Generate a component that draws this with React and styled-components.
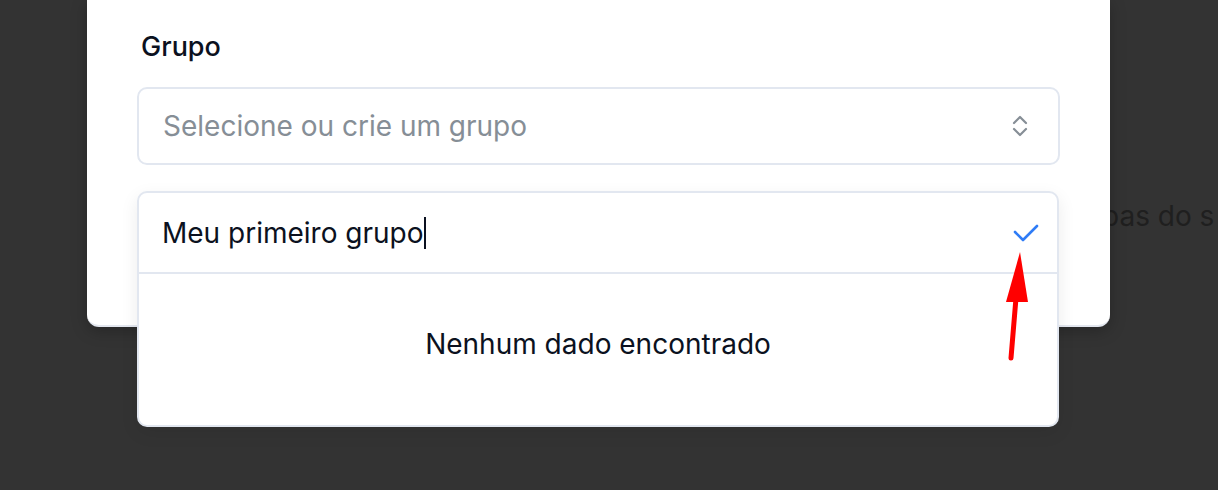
import styled, { createGlobalStyle } from "styled-components";

const GlobalStyle = createGlobalStyle`
  html, body {
    margin: 0;
    padding: 0;
    background: #333333;
    font-family: Inter, "Noto Sans", sans-serif;
  }
`;

const Page = styled.div`
  position: relative;
  width: 1218px;
  height: 490px;
  overflow: hidden;
  background: #333333;
`;

const BehindText = styled.div`
  position: absolute;
  left: 1102px;
  top: 199px;
  font-size: 28px;
  color: #1f1f1f;
  white-space: nowrap;
`;

const Modal = styled.div`
  position: relative;
  margin-left: 87px;
  width: 1023px;
  height: 327px;
  box-sizing: border-box;
  background: #ffffff;
  border-radius: 0 0 12px 12px;
  border-bottom: 2px solid #e3e7ef;
  box-shadow: 0 4px 16px rgba(0, 0, 0, 0.25);
  padding: 30px 50px 0 50px;
  z-index: 1;
`;

const Label = styled.div`
  font-size: 27px;
  font-weight: 500;
  color: #0b1120;
  line-height: 34px;
  padding-left: 4px;
  margin-bottom: 23px;
`;

const Select = styled.div`
  height: 78px;
  box-sizing: border-box;
  border: 2px solid #e2e7f0;
  border-radius: 10px;
  display: flex;
  align-items: center;
  justify-content: space-between;
  padding: 0 27px 0 24px;
`;

const Placeholder = styled.span`
  font-size: 28px;
  color: #868e96;
`;

const Dropdown = styled.div`
  position: absolute;
  left: 137px;
  top: 191px;
  width: 922px;
  height: 236px;
  box-sizing: border-box;
  background: #ffffff;
  border: 2px solid #e2e7f0;
  border-radius: 10px;
  box-shadow: 0 6px 18px rgba(0, 0, 0, 0.08);
  z-index: 2;
  display: flex;
  flex-direction: column;
`;

const InputRow = styled.div`
  height: 81px;
  box-sizing: border-box;
  border-bottom: 2px solid #e2e7f0;
  display: flex;
  align-items: center;
  justify-content: space-between;
  padding: 0 17px 0 23px;
`;

const Typed = styled.span`
  font-size: 28px;
  color: #0b1120;
  display: flex;
  align-items: center;
`;

const Caret = styled.span`
  display: inline-block;
  width: 2px;
  height: 32px;
  background: #0b1120;
`;

const Empty = styled.div`
  flex: 1;
  display: flex;
  align-items: center;
  justify-content: center;
  font-size: 28px;
  color: #0b1120;
  padding-bottom: 12px;
`;

const Arrow = styled.svg`
  position: absolute;
  left: 996px;
  top: 248px;
  z-index: 3;
`;

const ChevronIcon = () => (
  <svg width="22" height="26" viewBox="0 0 22 26" fill="none">
    <path d="M5 10l6-6 6 6M5 16l6 6 6-6" stroke="#868e96" strokeWidth="2.2" strokeLinecap="round" strokeLinejoin="round" />
  </svg>
);

const CheckIcon = () => (
  <svg width="28" height="20" viewBox="0 0 28 20" fill="none">
    <path d="M3 9l8 8 14-14" stroke="#2f7cf6" strokeWidth="2.6" strokeLinecap="round" strokeLinejoin="round" />
  </svg>
);

export default function App() {
  return (
    <Page>
      <GlobalStyle />
      <BehindText>pas do s</BehindText>
      <Modal>
        <Label>Grupo</Label>
        <Select>
          <Placeholder>Selecione ou crie um grupo</Placeholder>
          <ChevronIcon />
        </Select>
      </Modal>
      <Dropdown>
        <InputRow>
          <Typed>
            Meu primeiro grupo
            <Caret />
          </Typed>
          <CheckIcon />
        </InputRow>
        <Empty>Nenhum dado encontrado</Empty>
      </Dropdown>
      <Arrow width="40" height="120" viewBox="0 0 40 120">
        <polygon points="24,4 10,54 32,54" fill="#ff0000" />
        <line x1="20" y1="50" x2="15" y2="110" stroke="#ff0000" strokeWidth="5" strokeLinecap="round" />
      </Arrow>
    </Page>
  );
}
